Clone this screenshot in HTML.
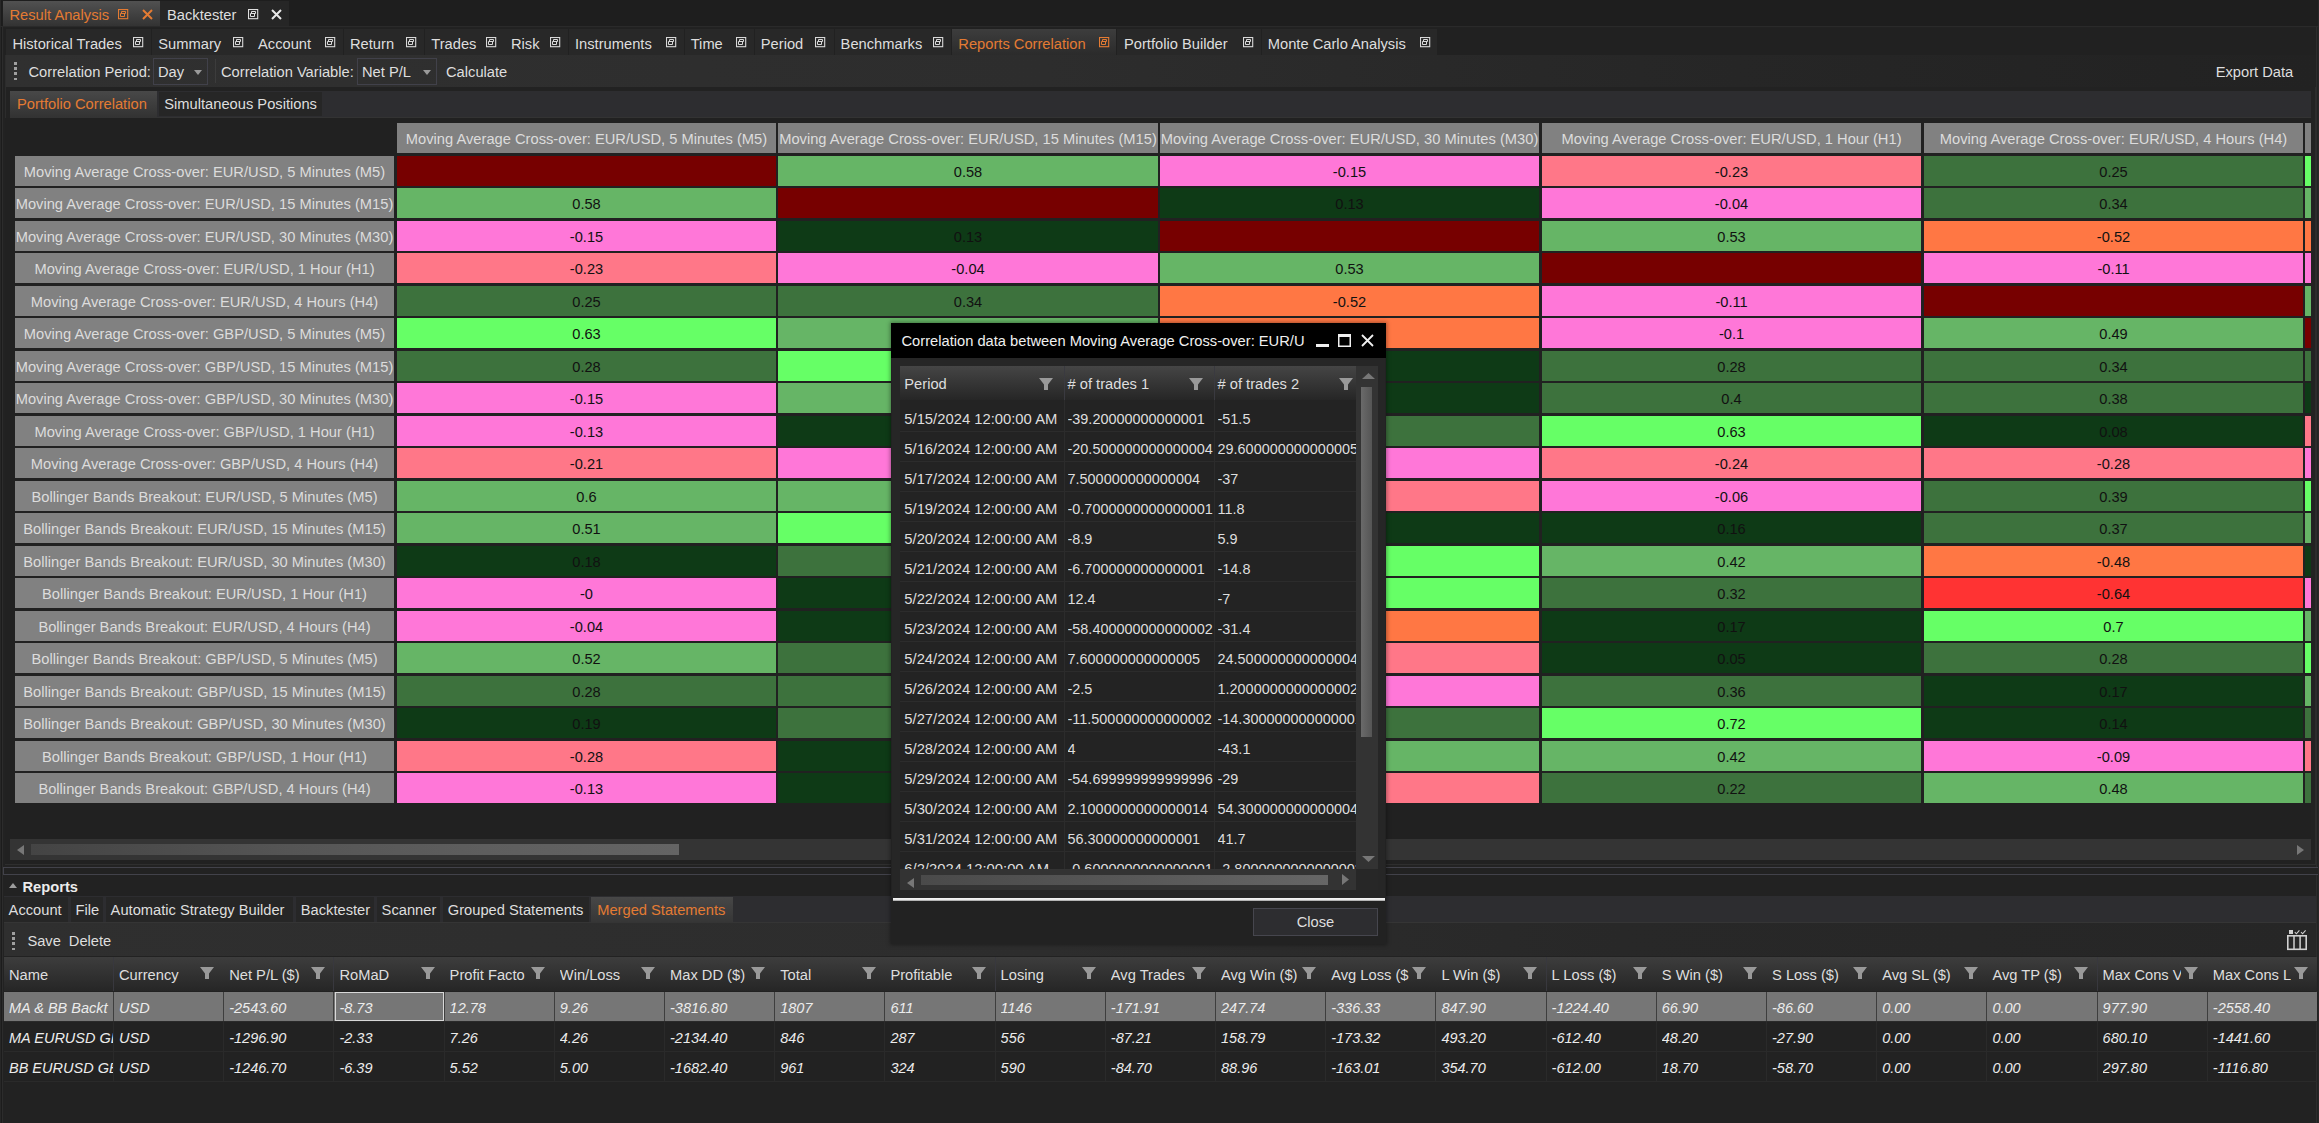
<!DOCTYPE html>
<html><head><meta charset="utf-8"><style>
html,body{margin:0;padding:0;width:2319px;height:1123px;overflow:hidden;background:#1e1e1e}
body{position:relative;font-family:"Liberation Sans",sans-serif}
body div,body svg{position:absolute}
.t{white-space:nowrap;line-height:20px;height:20px}
.c{display:flex;align-items:center;justify-content:center;white-space:nowrap;overflow:hidden;line-height:20px;padding-top:2px;box-sizing:border-box}
</style></head><body>
<div style="left:0px;top:0px;width:2319px;height:1123px;background:#1e1e1e"></div>
<div style="left:3px;top:1px;width:157px;height:25px;background:linear-gradient(#515151,#333333)"></div>
<div class="t" style="left:9.5px;top:4.5px;color:#e47b33;font-size:14.7px;">Result Analysis</div>
<svg style="left:118px;top:9px" width="11" height="11" viewBox="0 0 11 11"><rect x="0.5" y="0.5" width="9.2" height="9.2" fill="none" stroke="#e47b33" stroke-width="1.1"/><path d="M3.5 2.5h4v2h-4z M2.5 4.5h4v3h-4z" fill="none" stroke="#e47b33" stroke-width="1"/></svg>
<svg style="left:142px;top:9px" width="11" height="11" viewBox="0 0 11 11"><path d="M1 1L10 10M10 1L1 10" stroke="#e47b33" stroke-width="2"/></svg>
<div style="left:160px;top:1px;width:129px;height:25px;background:#262626"></div>
<div class="t" style="left:167px;top:4.5px;color:#dedede;font-size:14.7px;">Backtester</div>
<svg style="left:248px;top:9px" width="11" height="11" viewBox="0 0 11 11"><rect x="0.5" y="0.5" width="9.2" height="9.2" fill="none" stroke="#e0e0e0" stroke-width="1.1"/><path d="M3.5 2.5h4v2h-4z M2.5 4.5h4v3h-4z" fill="none" stroke="#e0e0e0" stroke-width="1"/></svg>
<svg style="left:271px;top:9px" width="11" height="11" viewBox="0 0 11 11"><path d="M1 1L10 10M10 1L1 10" stroke="#e8e8e8" stroke-width="2"/></svg>
<div style="left:0px;top:27px;width:2319px;height:1096px;background:#222"></div>
<div style="left:0px;top:0px;width:1px;height:1123px;background:#272727"></div>
<div style="left:1px;top:0px;width:1px;height:1123px;background:#1c1c1c"></div>
<div style="left:2px;top:27px;width:1px;height:1096px;background:#2c2c2c"></div>
<div style="left:2316px;top:27px;width:1px;height:1096px;background:#2c2c2c"></div>
<div style="left:2318px;top:0px;width:1px;height:1123px;background:#272727"></div>
<div style="left:0px;top:26px;width:2319px;height:1px;background:#2a2a2a"></div>
<div style="left:5px;top:28px;width:1px;height:837px;background:#2c2c2c"></div>
<div style="left:2315px;top:28px;width:1px;height:837px;background:#2c2c2c"></div>
<div style="left:4px;top:28px;width:2312px;height:27px;background:#212121"></div>
<div style="left:6px;top:29px;width:145.4px;height:26px;background:#282828"></div>
<div class="t" style="left:12.4px;top:33.5px;color:#dedede;font-size:14.7px;">Historical Trades</div>
<svg style="left:133px;top:37px" width="11" height="11" viewBox="0 0 11 11"><rect x="0.5" y="0.5" width="9.2" height="9.2" fill="none" stroke="#d8d8d8" stroke-width="1.1"/><path d="M3.5 2.5h4v2h-4z M2.5 4.5h4v3h-4z" fill="none" stroke="#d8d8d8" stroke-width="1"/></svg>
<div style="left:152px;top:29px;width:99.5px;height:26px;background:#282828"></div>
<div class="t" style="left:158.3px;top:33.5px;color:#dedede;font-size:14.7px;">Summary</div>
<svg style="left:233px;top:37px" width="11" height="11" viewBox="0 0 11 11"><rect x="0.5" y="0.5" width="9.2" height="9.2" fill="none" stroke="#d8d8d8" stroke-width="1.1"/><path d="M3.5 2.5h4v2h-4z M2.5 4.5h4v3h-4z" fill="none" stroke="#d8d8d8" stroke-width="1"/></svg>
<div style="left:252px;top:29px;width:91.30000000000001px;height:26px;background:#282828"></div>
<div class="t" style="left:258px;top:33.5px;color:#dedede;font-size:14.7px;">Account</div>
<svg style="left:325px;top:37px" width="11" height="11" viewBox="0 0 11 11"><rect x="0.5" y="0.5" width="9.2" height="9.2" fill="none" stroke="#d8d8d8" stroke-width="1.1"/><path d="M3.5 2.5h4v2h-4z M2.5 4.5h4v3h-4z" fill="none" stroke="#d8d8d8" stroke-width="1"/></svg>
<div style="left:344px;top:29px;width:80.30000000000001px;height:26px;background:#282828"></div>
<div class="t" style="left:350px;top:33.5px;color:#dedede;font-size:14.7px;">Return</div>
<svg style="left:406px;top:37px" width="11" height="11" viewBox="0 0 11 11"><rect x="0.5" y="0.5" width="9.2" height="9.2" fill="none" stroke="#d8d8d8" stroke-width="1.1"/><path d="M3.5 2.5h4v2h-4z M2.5 4.5h4v3h-4z" fill="none" stroke="#d8d8d8" stroke-width="1"/></svg>
<div style="left:425px;top:29px;width:79.5px;height:26px;background:#282828"></div>
<div class="t" style="left:431.3px;top:33.5px;color:#dedede;font-size:14.7px;">Trades</div>
<svg style="left:486px;top:37px" width="11" height="11" viewBox="0 0 11 11"><rect x="0.5" y="0.5" width="9.2" height="9.2" fill="none" stroke="#d8d8d8" stroke-width="1.1"/><path d="M3.5 2.5h4v2h-4z M2.5 4.5h4v3h-4z" fill="none" stroke="#d8d8d8" stroke-width="1"/></svg>
<div style="left:505px;top:29px;width:63px;height:26px;background:#282828"></div>
<div class="t" style="left:511px;top:33.5px;color:#dedede;font-size:14.7px;">Risk</div>
<svg style="left:550px;top:37px" width="11" height="11" viewBox="0 0 11 11"><rect x="0.5" y="0.5" width="9.2" height="9.2" fill="none" stroke="#d8d8d8" stroke-width="1.1"/><path d="M3.5 2.5h4v2h-4z M2.5 4.5h4v3h-4z" fill="none" stroke="#d8d8d8" stroke-width="1"/></svg>
<div style="left:569px;top:29px;width:115px;height:26px;background:#282828"></div>
<div class="t" style="left:575px;top:33.5px;color:#dedede;font-size:14.7px;">Instruments</div>
<svg style="left:666px;top:37px" width="11" height="11" viewBox="0 0 11 11"><rect x="0.5" y="0.5" width="9.2" height="9.2" fill="none" stroke="#d8d8d8" stroke-width="1.1"/><path d="M3.5 2.5h4v2h-4z M2.5 4.5h4v3h-4z" fill="none" stroke="#d8d8d8" stroke-width="1"/></svg>
<div style="left:685px;top:29px;width:69px;height:26px;background:#282828"></div>
<div class="t" style="left:690.7px;top:33.5px;color:#dedede;font-size:14.7px;">Time</div>
<svg style="left:736px;top:37px" width="11" height="11" viewBox="0 0 11 11"><rect x="0.5" y="0.5" width="9.2" height="9.2" fill="none" stroke="#d8d8d8" stroke-width="1.1"/><path d="M3.5 2.5h4v2h-4z M2.5 4.5h4v3h-4z" fill="none" stroke="#d8d8d8" stroke-width="1"/></svg>
<div style="left:755px;top:29px;width:79px;height:26px;background:#282828"></div>
<div class="t" style="left:760.8px;top:33.5px;color:#dedede;font-size:14.7px;">Period</div>
<svg style="left:815px;top:37px" width="11" height="11" viewBox="0 0 11 11"><rect x="0.5" y="0.5" width="9.2" height="9.2" fill="none" stroke="#d8d8d8" stroke-width="1.1"/><path d="M3.5 2.5h4v2h-4z M2.5 4.5h4v3h-4z" fill="none" stroke="#d8d8d8" stroke-width="1"/></svg>
<div style="left:835px;top:29px;width:116px;height:26px;background:#282828"></div>
<div class="t" style="left:840.6px;top:33.5px;color:#dedede;font-size:14.7px;">Benchmarks</div>
<svg style="left:933px;top:37px" width="11" height="11" viewBox="0 0 11 11"><rect x="0.5" y="0.5" width="9.2" height="9.2" fill="none" stroke="#d8d8d8" stroke-width="1.1"/><path d="M3.5 2.5h4v2h-4z M2.5 4.5h4v3h-4z" fill="none" stroke="#d8d8d8" stroke-width="1"/></svg>
<div style="left:952px;top:29px;width:164px;height:26px;background:linear-gradient(#3d3d3d,#2b2b2b)"></div>
<div class="t" style="left:958.3px;top:33.5px;color:#e47b33;font-size:14.7px;">Reports Correlation</div>
<svg style="left:1099px;top:37px" width="11" height="11" viewBox="0 0 11 11"><rect x="0.5" y="0.5" width="9.2" height="9.2" fill="none" stroke="#e47b33" stroke-width="1.1"/><path d="M3.5 2.5h4v2h-4z M2.5 4.5h4v3h-4z" fill="none" stroke="#e47b33" stroke-width="1"/></svg>
<div style="left:1117px;top:29px;width:143.79999999999995px;height:26px;background:#282828"></div>
<div class="t" style="left:1124px;top:33.5px;color:#dedede;font-size:14.7px;">Portfolio Builder</div>
<svg style="left:1243px;top:37px" width="11" height="11" viewBox="0 0 11 11"><rect x="0.5" y="0.5" width="9.2" height="9.2" fill="none" stroke="#d8d8d8" stroke-width="1.1"/><path d="M3.5 2.5h4v2h-4z M2.5 4.5h4v3h-4z" fill="none" stroke="#d8d8d8" stroke-width="1"/></svg>
<div style="left:1262px;top:29px;width:174.70000000000005px;height:26px;background:#282828"></div>
<div class="t" style="left:1267.8px;top:33.5px;color:#dedede;font-size:14.7px;">Monte Carlo Analysis</div>
<svg style="left:1420px;top:37px" width="11" height="11" viewBox="0 0 11 11"><rect x="0.5" y="0.5" width="9.2" height="9.2" fill="none" stroke="#d8d8d8" stroke-width="1.1"/><path d="M3.5 2.5h4v2h-4z M2.5 4.5h4v3h-4z" fill="none" stroke="#d8d8d8" stroke-width="1"/></svg>
<div style="left:6px;top:55px;width:2310px;height:32px;background:linear-gradient(to right,#303030 0%,#2d2d2d 45%,#262626 75%,#222 100%)"></div>
<div style="left:14px;top:62.0px;width:2.5px;height:2.5px;background:#a0a0a0"></div>
<div style="left:14px;top:67.2px;width:2.5px;height:2.5px;background:#a0a0a0"></div>
<div style="left:14px;top:72.4px;width:2.5px;height:2.5px;background:#a0a0a0"></div>
<div style="left:14px;top:77.6px;width:2.5px;height:2.5px;background:#a0a0a0"></div>
<div class="t" style="left:28.5px;top:62px;color:#dedede;font-size:14.7px;">Correlation Period:</div>
<div style="left:153px;top:57.5px;width:55px;height:27px;border:1px solid #41414a;box-sizing:border-box"></div>
<div class="t" style="left:158px;top:62px;color:#dedede;font-size:14.7px;">Day</div>
<svg style="left:194px;top:69.5px" width="8" height="5" viewBox="0 0 8 5"><path d="M0 0H8L4.0 5Z" fill="#9a9a9a"/></svg>
<div style="left:215px;top:59px;width:1px;height:24px;background:#3c3c3c"></div>
<div class="t" style="left:221px;top:62px;color:#dedede;font-size:14.7px;">Correlation Variable:</div>
<div style="left:357px;top:57.5px;width:80px;height:27px;border:1px solid #41414a;box-sizing:border-box"></div>
<div class="t" style="left:362px;top:62px;color:#dedede;font-size:14.7px;">Net P/L</div>
<svg style="left:423px;top:69.5px" width="8" height="5" viewBox="0 0 8 5"><path d="M0 0H8L4.0 5Z" fill="#9a9a9a"/></svg>
<div class="t" style="left:446px;top:62px;color:#dedede;font-size:14.7px;">Calculate</div>
<div class="t" style="left:2215.7px;top:62px;color:#dedede;font-size:14.7px;">Export Data</div>
<div style="left:10px;top:91px;width:2301px;height:26px;background:#2d2d30"></div>
<div style="left:10px;top:91px;width:147px;height:26px;background:linear-gradient(#484848,#333)"></div>
<div class="t" style="left:17px;top:94px;color:#e47b33;font-size:14.7px;">Portfolio Correlation</div>
<div style="left:159px;top:92px;width:162.5px;height:23.5px;background:#262626"></div>
<div class="t" style="left:164.3px;top:94px;color:#dedede;font-size:14.7px;">Simultaneous Positions</div>
<div style="left:10px;top:117px;width:2301px;height:1px;background:#333"></div>
<div style="left:5px;top:118px;width:2306px;height:746px;background:#212121;overflow:hidden">
<div class="c" style="left:392.00px;top:5.00px;width:379.00px;height:30.00px;background:#818181;color:#dcdcdc;font-size:14.7px">Moving Average Cross-over: EUR/USD, 5 Minutes (M5)</div>
<div class="c" style="left:773.00px;top:5.00px;width:380.00px;height:30.00px;background:#818181;color:#dcdcdc;font-size:14.7px">Moving Average Cross-over: EUR/USD, 15 Minutes (M15)</div>
<div class="c" style="left:1155.00px;top:5.00px;width:379.00px;height:30.00px;background:#818181;color:#dcdcdc;font-size:14.7px">Moving Average Cross-over: EUR/USD, 30 Minutes (M30)</div>
<div class="c" style="left:1537.00px;top:5.00px;width:379.00px;height:30.00px;background:#818181;color:#dcdcdc;font-size:14.7px">Moving Average Cross-over: EUR/USD, 1 Hour (H1)</div>
<div class="c" style="left:1919.00px;top:5.00px;width:379.00px;height:30.00px;background:#818181;color:#dcdcdc;font-size:14.7px">Moving Average Cross-over: EUR/USD, 4 Hours (H4)</div>
<div class="c" style="left:2300.00px;top:5.00px;width:379.00px;height:30.00px;background:#818181;color:#dcdcdc;font-size:14.7px"></div>
<div class="c" style="left:10.00px;top:38.00px;width:379.00px;height:30.00px;background:#818181;color:#dcdcdc;font-size:14.7px">Moving Average Cross-over: EUR/USD, 5 Minutes (M5)</div>
<div class="c" style="left:392.00px;top:38.00px;width:379.00px;height:30.00px;background:#770000;color:#111;font-size:14.6px"></div>
<div class="c" style="left:773.00px;top:38.00px;width:380.00px;height:30.00px;background:#66b566;color:#111;font-size:14.6px">0.58</div>
<div class="c" style="left:1155.00px;top:38.00px;width:379.00px;height:30.00px;background:#ff77d8;color:#111;font-size:14.6px">-0.15</div>
<div class="c" style="left:1537.00px;top:38.00px;width:379.00px;height:30.00px;background:#ff7788;color:#111;font-size:14.6px">-0.23</div>
<div class="c" style="left:1919.00px;top:38.00px;width:379.00px;height:30.00px;background:#3d723d;color:#111;font-size:14.6px">0.25</div>
<div class="c" style="left:2300.00px;top:38.00px;width:379.00px;height:30.00px;background:#66ff66;color:#111;font-size:14.6px"></div>
<div class="c" style="left:10.00px;top:70.00px;width:379.00px;height:30.00px;background:#818181;color:#dcdcdc;font-size:14.7px">Moving Average Cross-over: EUR/USD, 15 Minutes (M15)</div>
<div class="c" style="left:392.00px;top:70.00px;width:379.00px;height:30.00px;background:#66b566;color:#111;font-size:14.6px">0.58</div>
<div class="c" style="left:773.00px;top:70.00px;width:380.00px;height:30.00px;background:#770000;color:#111;font-size:14.6px"></div>
<div class="c" style="left:1155.00px;top:70.00px;width:379.00px;height:30.00px;background:#0e3a16;color:#111;font-size:14.6px">0.13</div>
<div class="c" style="left:1537.00px;top:70.00px;width:379.00px;height:30.00px;background:#ff77d8;color:#111;font-size:14.6px">-0.04</div>
<div class="c" style="left:1919.00px;top:70.00px;width:379.00px;height:30.00px;background:#3d723d;color:#111;font-size:14.6px">0.34</div>
<div class="c" style="left:2300.00px;top:70.00px;width:379.00px;height:30.00px;background:#66b566;color:#111;font-size:14.6px"></div>
<div class="c" style="left:10.00px;top:103.00px;width:379.00px;height:30.00px;background:#818181;color:#dcdcdc;font-size:14.7px">Moving Average Cross-over: EUR/USD, 30 Minutes (M30)</div>
<div class="c" style="left:392.00px;top:103.00px;width:379.00px;height:30.00px;background:#ff77d8;color:#111;font-size:14.6px">-0.15</div>
<div class="c" style="left:773.00px;top:103.00px;width:380.00px;height:30.00px;background:#0e3a16;color:#111;font-size:14.6px">0.13</div>
<div class="c" style="left:1155.00px;top:103.00px;width:379.00px;height:30.00px;background:#770000;color:#111;font-size:14.6px"></div>
<div class="c" style="left:1537.00px;top:103.00px;width:379.00px;height:30.00px;background:#66b566;color:#111;font-size:14.6px">0.53</div>
<div class="c" style="left:1919.00px;top:103.00px;width:379.00px;height:30.00px;background:#ff7744;color:#111;font-size:14.6px">-0.52</div>
<div class="c" style="left:2300.00px;top:103.00px;width:379.00px;height:30.00px;background:#ff7744;color:#111;font-size:14.6px"></div>
<div class="c" style="left:10.00px;top:135.00px;width:379.00px;height:30.00px;background:#818181;color:#dcdcdc;font-size:14.7px">Moving Average Cross-over: EUR/USD, 1 Hour (H1)</div>
<div class="c" style="left:392.00px;top:135.00px;width:379.00px;height:30.00px;background:#ff7788;color:#111;font-size:14.6px">-0.23</div>
<div class="c" style="left:773.00px;top:135.00px;width:380.00px;height:30.00px;background:#ff77d8;color:#111;font-size:14.6px">-0.04</div>
<div class="c" style="left:1155.00px;top:135.00px;width:379.00px;height:30.00px;background:#66b566;color:#111;font-size:14.6px">0.53</div>
<div class="c" style="left:1537.00px;top:135.00px;width:379.00px;height:30.00px;background:#770000;color:#111;font-size:14.6px"></div>
<div class="c" style="left:1919.00px;top:135.00px;width:379.00px;height:30.00px;background:#ff77d8;color:#111;font-size:14.6px">-0.11</div>
<div class="c" style="left:2300.00px;top:135.00px;width:379.00px;height:30.00px;background:#ff77d8;color:#111;font-size:14.6px"></div>
<div class="c" style="left:10.00px;top:168.00px;width:379.00px;height:30.00px;background:#818181;color:#dcdcdc;font-size:14.7px">Moving Average Cross-over: EUR/USD, 4 Hours (H4)</div>
<div class="c" style="left:392.00px;top:168.00px;width:379.00px;height:30.00px;background:#3d723d;color:#111;font-size:14.6px">0.25</div>
<div class="c" style="left:773.00px;top:168.00px;width:380.00px;height:30.00px;background:#3d723d;color:#111;font-size:14.6px">0.34</div>
<div class="c" style="left:1155.00px;top:168.00px;width:379.00px;height:30.00px;background:#ff7744;color:#111;font-size:14.6px">-0.52</div>
<div class="c" style="left:1537.00px;top:168.00px;width:379.00px;height:30.00px;background:#ff77d8;color:#111;font-size:14.6px">-0.11</div>
<div class="c" style="left:1919.00px;top:168.00px;width:379.00px;height:30.00px;background:#770000;color:#111;font-size:14.6px"></div>
<div class="c" style="left:2300.00px;top:168.00px;width:379.00px;height:30.00px;background:#66b566;color:#111;font-size:14.6px"></div>
<div class="c" style="left:10.00px;top:200.00px;width:379.00px;height:30.00px;background:#818181;color:#dcdcdc;font-size:14.7px">Moving Average Cross-over: GBP/USD, 5 Minutes (M5)</div>
<div class="c" style="left:392.00px;top:200.00px;width:379.00px;height:30.00px;background:#66ff66;color:#111;font-size:14.6px">0.63</div>
<div class="c" style="left:773.00px;top:200.00px;width:380.00px;height:30.00px;background:#66b566;color:#111;font-size:14.6px"></div>
<div class="c" style="left:1155.00px;top:200.00px;width:379.00px;height:30.00px;background:#ff7744;color:#111;font-size:14.6px"></div>
<div class="c" style="left:1537.00px;top:200.00px;width:379.00px;height:30.00px;background:#ff77d8;color:#111;font-size:14.6px">-0.1</div>
<div class="c" style="left:1919.00px;top:200.00px;width:379.00px;height:30.00px;background:#66b566;color:#111;font-size:14.6px">0.49</div>
<div class="c" style="left:2300.00px;top:200.00px;width:379.00px;height:30.00px;background:#770000;color:#111;font-size:14.6px"></div>
<div class="c" style="left:10.00px;top:233.00px;width:379.00px;height:30.00px;background:#818181;color:#dcdcdc;font-size:14.7px">Moving Average Cross-over: GBP/USD, 15 Minutes (M15)</div>
<div class="c" style="left:392.00px;top:233.00px;width:379.00px;height:30.00px;background:#3d723d;color:#111;font-size:14.6px">0.28</div>
<div class="c" style="left:773.00px;top:233.00px;width:380.00px;height:30.00px;background:#66ff66;color:#111;font-size:14.6px"></div>
<div class="c" style="left:1155.00px;top:233.00px;width:379.00px;height:30.00px;background:#0e3a16;color:#111;font-size:14.6px"></div>
<div class="c" style="left:1537.00px;top:233.00px;width:379.00px;height:30.00px;background:#3d723d;color:#111;font-size:14.6px">0.28</div>
<div class="c" style="left:1919.00px;top:233.00px;width:379.00px;height:30.00px;background:#3d723d;color:#111;font-size:14.6px">0.34</div>
<div class="c" style="left:2300.00px;top:233.00px;width:379.00px;height:30.00px;background:#3d723d;color:#111;font-size:14.6px"></div>
<div class="c" style="left:10.00px;top:265.00px;width:379.00px;height:30.00px;background:#818181;color:#dcdcdc;font-size:14.7px">Moving Average Cross-over: GBP/USD, 30 Minutes (M30)</div>
<div class="c" style="left:392.00px;top:265.00px;width:379.00px;height:30.00px;background:#ff77d8;color:#111;font-size:14.6px">-0.15</div>
<div class="c" style="left:773.00px;top:265.00px;width:380.00px;height:30.00px;background:#66b566;color:#111;font-size:14.6px"></div>
<div class="c" style="left:1155.00px;top:265.00px;width:379.00px;height:30.00px;background:#0e3a16;color:#111;font-size:14.6px"></div>
<div class="c" style="left:1537.00px;top:265.00px;width:379.00px;height:30.00px;background:#3d723d;color:#111;font-size:14.6px">0.4</div>
<div class="c" style="left:1919.00px;top:265.00px;width:379.00px;height:30.00px;background:#3d723d;color:#111;font-size:14.6px">0.38</div>
<div class="c" style="left:2300.00px;top:265.00px;width:379.00px;height:30.00px;background:#0e3a16;color:#111;font-size:14.6px"></div>
<div class="c" style="left:10.00px;top:298.00px;width:379.00px;height:30.00px;background:#818181;color:#dcdcdc;font-size:14.7px">Moving Average Cross-over: GBP/USD, 1 Hour (H1)</div>
<div class="c" style="left:392.00px;top:298.00px;width:379.00px;height:30.00px;background:#ff77d8;color:#111;font-size:14.6px">-0.13</div>
<div class="c" style="left:773.00px;top:298.00px;width:380.00px;height:30.00px;background:#0e3a16;color:#111;font-size:14.6px"></div>
<div class="c" style="left:1155.00px;top:298.00px;width:379.00px;height:30.00px;background:#3d723d;color:#111;font-size:14.6px"></div>
<div class="c" style="left:1537.00px;top:298.00px;width:379.00px;height:30.00px;background:#66ff66;color:#111;font-size:14.6px">0.63</div>
<div class="c" style="left:1919.00px;top:298.00px;width:379.00px;height:30.00px;background:#0e3a16;color:#111;font-size:14.6px">0.08</div>
<div class="c" style="left:2300.00px;top:298.00px;width:379.00px;height:30.00px;background:#ff7788;color:#111;font-size:14.6px"></div>
<div class="c" style="left:10.00px;top:330.00px;width:379.00px;height:30.00px;background:#818181;color:#dcdcdc;font-size:14.7px">Moving Average Cross-over: GBP/USD, 4 Hours (H4)</div>
<div class="c" style="left:392.00px;top:330.00px;width:379.00px;height:30.00px;background:#ff7788;color:#111;font-size:14.6px">-0.21</div>
<div class="c" style="left:773.00px;top:330.00px;width:380.00px;height:30.00px;background:#ff77d8;color:#111;font-size:14.6px"></div>
<div class="c" style="left:1155.00px;top:330.00px;width:379.00px;height:30.00px;background:#ff77d8;color:#111;font-size:14.6px"></div>
<div class="c" style="left:1537.00px;top:330.00px;width:379.00px;height:30.00px;background:#ff7788;color:#111;font-size:14.6px">-0.24</div>
<div class="c" style="left:1919.00px;top:330.00px;width:379.00px;height:30.00px;background:#ff7788;color:#111;font-size:14.6px">-0.28</div>
<div class="c" style="left:2300.00px;top:330.00px;width:379.00px;height:30.00px;background:#ff77d8;color:#111;font-size:14.6px"></div>
<div class="c" style="left:10.00px;top:363.00px;width:379.00px;height:30.00px;background:#818181;color:#dcdcdc;font-size:14.7px">Bollinger Bands Breakout: EUR/USD, 5 Minutes (M5)</div>
<div class="c" style="left:392.00px;top:363.00px;width:379.00px;height:30.00px;background:#66b566;color:#111;font-size:14.6px">0.6</div>
<div class="c" style="left:773.00px;top:363.00px;width:380.00px;height:30.00px;background:#66b566;color:#111;font-size:14.6px"></div>
<div class="c" style="left:1155.00px;top:363.00px;width:379.00px;height:30.00px;background:#ff7788;color:#111;font-size:14.6px"></div>
<div class="c" style="left:1537.00px;top:363.00px;width:379.00px;height:30.00px;background:#ff77d8;color:#111;font-size:14.6px">-0.06</div>
<div class="c" style="left:1919.00px;top:363.00px;width:379.00px;height:30.00px;background:#3d723d;color:#111;font-size:14.6px">0.39</div>
<div class="c" style="left:2300.00px;top:363.00px;width:379.00px;height:30.00px;background:#66ff66;color:#111;font-size:14.6px"></div>
<div class="c" style="left:10.00px;top:395.00px;width:379.00px;height:30.00px;background:#818181;color:#dcdcdc;font-size:14.7px">Bollinger Bands Breakout: EUR/USD, 15 Minutes (M15)</div>
<div class="c" style="left:392.00px;top:395.00px;width:379.00px;height:30.00px;background:#66b566;color:#111;font-size:14.6px">0.51</div>
<div class="c" style="left:773.00px;top:395.00px;width:380.00px;height:30.00px;background:#66ff66;color:#111;font-size:14.6px"></div>
<div class="c" style="left:1155.00px;top:395.00px;width:379.00px;height:30.00px;background:#0e3a16;color:#111;font-size:14.6px"></div>
<div class="c" style="left:1537.00px;top:395.00px;width:379.00px;height:30.00px;background:#0e3a16;color:#111;font-size:14.6px">0.16</div>
<div class="c" style="left:1919.00px;top:395.00px;width:379.00px;height:30.00px;background:#3d723d;color:#111;font-size:14.6px">0.37</div>
<div class="c" style="left:2300.00px;top:395.00px;width:379.00px;height:30.00px;background:#66b566;color:#111;font-size:14.6px"></div>
<div class="c" style="left:10.00px;top:428.00px;width:379.00px;height:30.00px;background:#818181;color:#dcdcdc;font-size:14.7px">Bollinger Bands Breakout: EUR/USD, 30 Minutes (M30)</div>
<div class="c" style="left:392.00px;top:428.00px;width:379.00px;height:30.00px;background:#0e3a16;color:#111;font-size:14.6px">0.18</div>
<div class="c" style="left:773.00px;top:428.00px;width:380.00px;height:30.00px;background:#3d723d;color:#111;font-size:14.6px"></div>
<div class="c" style="left:1155.00px;top:428.00px;width:379.00px;height:30.00px;background:#66ff66;color:#111;font-size:14.6px"></div>
<div class="c" style="left:1537.00px;top:428.00px;width:379.00px;height:30.00px;background:#66b566;color:#111;font-size:14.6px">0.42</div>
<div class="c" style="left:1919.00px;top:428.00px;width:379.00px;height:30.00px;background:#ff7744;color:#111;font-size:14.6px">-0.48</div>
<div class="c" style="left:2300.00px;top:428.00px;width:379.00px;height:30.00px;background:#0e3a16;color:#111;font-size:14.6px"></div>
<div class="c" style="left:10.00px;top:460.00px;width:379.00px;height:30.00px;background:#818181;color:#dcdcdc;font-size:14.7px">Bollinger Bands Breakout: EUR/USD, 1 Hour (H1)</div>
<div class="c" style="left:392.00px;top:460.00px;width:379.00px;height:30.00px;background:#ff77d8;color:#111;font-size:14.6px">-0</div>
<div class="c" style="left:773.00px;top:460.00px;width:380.00px;height:30.00px;background:#0e3a16;color:#111;font-size:14.6px"></div>
<div class="c" style="left:1155.00px;top:460.00px;width:379.00px;height:30.00px;background:#66ff66;color:#111;font-size:14.6px"></div>
<div class="c" style="left:1537.00px;top:460.00px;width:379.00px;height:30.00px;background:#3d723d;color:#111;font-size:14.6px">0.32</div>
<div class="c" style="left:1919.00px;top:460.00px;width:379.00px;height:30.00px;background:#ff3333;color:#111;font-size:14.6px">-0.64</div>
<div class="c" style="left:2300.00px;top:460.00px;width:379.00px;height:30.00px;background:#ff77d8;color:#111;font-size:14.6px"></div>
<div class="c" style="left:10.00px;top:493.00px;width:379.00px;height:30.00px;background:#818181;color:#dcdcdc;font-size:14.7px">Bollinger Bands Breakout: EUR/USD, 4 Hours (H4)</div>
<div class="c" style="left:392.00px;top:493.00px;width:379.00px;height:30.00px;background:#ff77d8;color:#111;font-size:14.6px">-0.04</div>
<div class="c" style="left:773.00px;top:493.00px;width:380.00px;height:30.00px;background:#0e3a16;color:#111;font-size:14.6px"></div>
<div class="c" style="left:1155.00px;top:493.00px;width:379.00px;height:30.00px;background:#ff7744;color:#111;font-size:14.6px"></div>
<div class="c" style="left:1537.00px;top:493.00px;width:379.00px;height:30.00px;background:#0e3a16;color:#111;font-size:14.6px">0.17</div>
<div class="c" style="left:1919.00px;top:493.00px;width:379.00px;height:30.00px;background:#66ff66;color:#111;font-size:14.6px">0.7</div>
<div class="c" style="left:2300.00px;top:493.00px;width:379.00px;height:30.00px;background:#66b566;color:#111;font-size:14.6px"></div>
<div class="c" style="left:10.00px;top:525.00px;width:379.00px;height:30.00px;background:#818181;color:#dcdcdc;font-size:14.7px">Bollinger Bands Breakout: GBP/USD, 5 Minutes (M5)</div>
<div class="c" style="left:392.00px;top:525.00px;width:379.00px;height:30.00px;background:#66b566;color:#111;font-size:14.6px">0.52</div>
<div class="c" style="left:773.00px;top:525.00px;width:380.00px;height:30.00px;background:#3d723d;color:#111;font-size:14.6px"></div>
<div class="c" style="left:1155.00px;top:525.00px;width:379.00px;height:30.00px;background:#ff7788;color:#111;font-size:14.6px"></div>
<div class="c" style="left:1537.00px;top:525.00px;width:379.00px;height:30.00px;background:#0e3a16;color:#111;font-size:14.6px">0.05</div>
<div class="c" style="left:1919.00px;top:525.00px;width:379.00px;height:30.00px;background:#3d723d;color:#111;font-size:14.6px">0.28</div>
<div class="c" style="left:2300.00px;top:525.00px;width:379.00px;height:30.00px;background:#66ff66;color:#111;font-size:14.6px"></div>
<div class="c" style="left:10.00px;top:558.00px;width:379.00px;height:30.00px;background:#818181;color:#dcdcdc;font-size:14.7px">Bollinger Bands Breakout: GBP/USD, 15 Minutes (M15)</div>
<div class="c" style="left:392.00px;top:558.00px;width:379.00px;height:30.00px;background:#3d723d;color:#111;font-size:14.6px">0.28</div>
<div class="c" style="left:773.00px;top:558.00px;width:380.00px;height:30.00px;background:#3d723d;color:#111;font-size:14.6px"></div>
<div class="c" style="left:1155.00px;top:558.00px;width:379.00px;height:30.00px;background:#ff77d8;color:#111;font-size:14.6px"></div>
<div class="c" style="left:1537.00px;top:558.00px;width:379.00px;height:30.00px;background:#3d723d;color:#111;font-size:14.6px">0.36</div>
<div class="c" style="left:1919.00px;top:558.00px;width:379.00px;height:30.00px;background:#0e3a16;color:#111;font-size:14.6px">0.17</div>
<div class="c" style="left:2300.00px;top:558.00px;width:379.00px;height:30.00px;background:#66b566;color:#111;font-size:14.6px"></div>
<div class="c" style="left:10.00px;top:590.00px;width:379.00px;height:30.00px;background:#818181;color:#dcdcdc;font-size:14.7px">Bollinger Bands Breakout: GBP/USD, 30 Minutes (M30)</div>
<div class="c" style="left:392.00px;top:590.00px;width:379.00px;height:30.00px;background:#0e3a16;color:#111;font-size:14.6px">0.19</div>
<div class="c" style="left:773.00px;top:590.00px;width:380.00px;height:30.00px;background:#3d723d;color:#111;font-size:14.6px"></div>
<div class="c" style="left:1155.00px;top:590.00px;width:379.00px;height:30.00px;background:#3d723d;color:#111;font-size:14.6px"></div>
<div class="c" style="left:1537.00px;top:590.00px;width:379.00px;height:30.00px;background:#66ff66;color:#111;font-size:14.6px">0.72</div>
<div class="c" style="left:1919.00px;top:590.00px;width:379.00px;height:30.00px;background:#0e3a16;color:#111;font-size:14.6px">0.14</div>
<div class="c" style="left:2300.00px;top:590.00px;width:379.00px;height:30.00px;background:#3d723d;color:#111;font-size:14.6px"></div>
<div class="c" style="left:10.00px;top:623.00px;width:379.00px;height:30.00px;background:#818181;color:#dcdcdc;font-size:14.7px">Bollinger Bands Breakout: GBP/USD, 1 Hour (H1)</div>
<div class="c" style="left:392.00px;top:623.00px;width:379.00px;height:30.00px;background:#ff7788;color:#111;font-size:14.6px">-0.28</div>
<div class="c" style="left:773.00px;top:623.00px;width:380.00px;height:30.00px;background:#0e3a16;color:#111;font-size:14.6px"></div>
<div class="c" style="left:1155.00px;top:623.00px;width:379.00px;height:30.00px;background:#66b566;color:#111;font-size:14.6px"></div>
<div class="c" style="left:1537.00px;top:623.00px;width:379.00px;height:30.00px;background:#66b566;color:#111;font-size:14.6px">0.42</div>
<div class="c" style="left:1919.00px;top:623.00px;width:379.00px;height:30.00px;background:#ff77d8;color:#111;font-size:14.6px">-0.09</div>
<div class="c" style="left:2300.00px;top:623.00px;width:379.00px;height:30.00px;background:#ff7788;color:#111;font-size:14.6px"></div>
<div class="c" style="left:10.00px;top:655.00px;width:379.00px;height:30.00px;background:#818181;color:#dcdcdc;font-size:14.7px">Bollinger Bands Breakout: GBP/USD, 4 Hours (H4)</div>
<div class="c" style="left:392.00px;top:655.00px;width:379.00px;height:30.00px;background:#ff77d8;color:#111;font-size:14.6px">-0.13</div>
<div class="c" style="left:773.00px;top:655.00px;width:380.00px;height:30.00px;background:#0e3a16;color:#111;font-size:14.6px"></div>
<div class="c" style="left:1155.00px;top:655.00px;width:379.00px;height:30.00px;background:#ff7788;color:#111;font-size:14.6px"></div>
<div class="c" style="left:1537.00px;top:655.00px;width:379.00px;height:30.00px;background:#3d723d;color:#111;font-size:14.6px">0.22</div>
<div class="c" style="left:1919.00px;top:655.00px;width:379.00px;height:30.00px;background:#66b566;color:#111;font-size:14.6px">0.48</div>
<div class="c" style="left:2300.00px;top:655.00px;width:379.00px;height:30.00px;background:#3d723d;color:#111;font-size:14.6px"></div>
<div style="left:5.00px;top:721.00px;width:2301.00px;height:21.00px;background:#343434"></div>
</div>
<svg style="left:17px;top:845px" width="7" height="10" viewBox="0 0 7 10"><path d="M7 0V10L0 5.0Z" fill="#777"/></svg>
<div style="left:31px;top:844px;width:648px;height:11px;background:linear-gradient(to right,#444,#555 40%,#5e5e5e 70%,#646464)"></div>
<svg style="left:2297px;top:845px" width="7" height="10" viewBox="0 0 7 10"><path d="M0 0V10L7 5.0Z" fill="#777"/></svg>
<div style="left:5px;top:864px;width:2311px;height:1px;background:#2e2e2e"></div>
<div style="left:3px;top:867px;width:2315px;height:8px;background:#222;border:1px solid #42424a;border-right:none;box-sizing:border-box"></div>
<svg style="left:9px;top:883px" width="8" height="5" viewBox="0 0 8 5"><path d="M0 5H8L4.0 0Z" fill="#9c9c9c"/></svg>
<div class="t" style="left:22.5px;top:877px;color:#ececec;font-size:14.7px;font-weight:bold">Reports</div>
<div style="left:4px;top:896px;width:2312px;height:26px;background:#2d2d30"></div>
<div style="left:3.9px;top:897px;width:64.0px;height:25px;background:#262626"></div>
<div class="t" style="left:8.6px;top:899.7px;color:#dedede;font-size:14.7px;">Account</div>
<div style="left:71.2px;top:897px;width:31.599999999999994px;height:25px;background:#262626"></div>
<div class="t" style="left:75.5px;top:899.7px;color:#dedede;font-size:14.7px;">File</div>
<div style="left:106px;top:897px;width:186.60000000000002px;height:25px;background:#262626"></div>
<div class="t" style="left:110.6px;top:899.7px;color:#dedede;font-size:14.7px;">Automatic Strategy Builder</div>
<div style="left:296px;top:897px;width:77.69999999999999px;height:25px;background:#262626"></div>
<div class="t" style="left:300.8px;top:899.7px;color:#dedede;font-size:14.7px;">Backtester</div>
<div style="left:377.3px;top:897px;width:62.599999999999966px;height:25px;background:#262626"></div>
<div class="t" style="left:381.6px;top:899.7px;color:#dedede;font-size:14.7px;">Scanner</div>
<div style="left:442.8px;top:897px;width:146.2px;height:25px;background:#262626"></div>
<div class="t" style="left:447.8px;top:899.7px;color:#dedede;font-size:14.7px;">Grouped Statements</div>
<div style="left:591px;top:897px;width:141.79999999999995px;height:25px;background:linear-gradient(#474747,#363636)"></div>
<div class="t" style="left:597.2px;top:899.7px;color:#e47b33;font-size:14.7px;">Merged Statements</div>
<div style="left:4px;top:922px;width:2312px;height:1px;background:#353535"></div>
<div style="left:4px;top:923px;width:2312px;height:33px;background:linear-gradient(to right,#2f2f2f 0%,#2d2d2d 45%,#282828 70%,#262626 100%)"></div>
<div style="left:12px;top:932.0px;width:2.5px;height:2.5px;background:#a0a0a0"></div>
<div style="left:12px;top:937.2px;width:2.5px;height:2.5px;background:#a0a0a0"></div>
<div style="left:12px;top:942.4px;width:2.5px;height:2.5px;background:#a0a0a0"></div>
<div style="left:12px;top:947.6px;width:2.5px;height:2.5px;background:#a0a0a0"></div>
<div class="t" style="left:27.4px;top:930.7px;color:#dedede;font-size:14.7px;">Save</div>
<div class="t" style="left:68.8px;top:930.7px;color:#dedede;font-size:14.7px;">Delete</div>
<svg style="left:2286px;top:929px" width="23" height="22" viewBox="0 0 23 22"><rect x="3" y="1" width="4" height="4" fill="#d0d0d0"/><path d="M8.8 3.2l1.6 1.6L13.4 1.4M15 3.2l1.6 1.6L19.6 1.4" stroke="#d0d0d0" stroke-width="1.1" fill="none"/><rect x="1.8" y="6.8" width="18.4" height="13.5" fill="none" stroke="#d0d0d0" stroke-width="1.6"/><path d="M8 6.8V20.3M14.1 6.8V20.3" stroke="#d0d0d0" stroke-width="1.5"/></svg>
<div style="left:4px;top:957px;width:2313px;height:34px;background:linear-gradient(#3d3d3d,#262626)"></div>
<div class="t" style="left:9.0px;top:964.7px;width:100.0px;overflow:hidden;color:#dedede;font-size:14.7px">Name</div>
<div class="t" style="left:119.0px;top:964.7px;width:78.7px;overflow:hidden;color:#dedede;font-size:14.7px">Currency</div>
<svg style="left:200px;top:967px" width="14" height="12" viewBox="0 0 14 12"><path d="M0 0H14L9 6.5V12H5V6.5Z" fill="#999"/></svg>
<div class="t" style="left:229.2px;top:964.7px;width:78.7px;overflow:hidden;color:#dedede;font-size:14.7px">Net P/L ($)</div>
<svg style="left:311px;top:967px" width="14" height="12" viewBox="0 0 14 12"><path d="M0 0H14L9 6.5V12H5V6.5Z" fill="#999"/></svg>
<div class="t" style="left:339.4px;top:964.7px;width:78.7px;overflow:hidden;color:#dedede;font-size:14.7px">RoMaD</div>
<svg style="left:421px;top:967px" width="14" height="12" viewBox="0 0 14 12"><path d="M0 0H14L9 6.5V12H5V6.5Z" fill="#999"/></svg>
<div class="t" style="left:449.6px;top:964.7px;width:78.7px;overflow:hidden;color:#dedede;font-size:14.7px">Profit Facto</div>
<svg style="left:531px;top:967px" width="14" height="12" viewBox="0 0 14 12"><path d="M0 0H14L9 6.5V12H5V6.5Z" fill="#999"/></svg>
<div class="t" style="left:559.8px;top:964.7px;width:78.7px;overflow:hidden;color:#dedede;font-size:14.7px">Win/Loss</div>
<svg style="left:641px;top:967px" width="14" height="12" viewBox="0 0 14 12"><path d="M0 0H14L9 6.5V12H5V6.5Z" fill="#999"/></svg>
<div class="t" style="left:670.0px;top:964.7px;width:78.7px;overflow:hidden;color:#dedede;font-size:14.7px">Max DD ($)</div>
<svg style="left:751px;top:967px" width="14" height="12" viewBox="0 0 14 12"><path d="M0 0H14L9 6.5V12H5V6.5Z" fill="#999"/></svg>
<div class="t" style="left:780.2px;top:964.7px;width:78.7px;overflow:hidden;color:#dedede;font-size:14.7px">Total</div>
<svg style="left:862px;top:967px" width="14" height="12" viewBox="0 0 14 12"><path d="M0 0H14L9 6.5V12H5V6.5Z" fill="#999"/></svg>
<div class="t" style="left:890.4px;top:964.7px;width:78.7px;overflow:hidden;color:#dedede;font-size:14.7px">Profitable</div>
<svg style="left:972px;top:967px" width="14" height="12" viewBox="0 0 14 12"><path d="M0 0H14L9 6.5V12H5V6.5Z" fill="#999"/></svg>
<div class="t" style="left:1000.6px;top:964.7px;width:78.7px;overflow:hidden;color:#dedede;font-size:14.7px">Losing</div>
<svg style="left:1082px;top:967px" width="14" height="12" viewBox="0 0 14 12"><path d="M0 0H14L9 6.5V12H5V6.5Z" fill="#999"/></svg>
<div class="t" style="left:1110.8px;top:964.7px;width:78.7px;overflow:hidden;color:#dedede;font-size:14.7px">Avg Trades</div>
<svg style="left:1192px;top:967px" width="14" height="12" viewBox="0 0 14 12"><path d="M0 0H14L9 6.5V12H5V6.5Z" fill="#999"/></svg>
<div class="t" style="left:1221.0px;top:964.7px;width:78.7px;overflow:hidden;color:#dedede;font-size:14.7px">Avg Win ($)</div>
<svg style="left:1302px;top:967px" width="14" height="12" viewBox="0 0 14 12"><path d="M0 0H14L9 6.5V12H5V6.5Z" fill="#999"/></svg>
<div class="t" style="left:1331.2px;top:964.7px;width:78.7px;overflow:hidden;color:#dedede;font-size:14.7px">Avg Loss ($</div>
<svg style="left:1412px;top:967px" width="14" height="12" viewBox="0 0 14 12"><path d="M0 0H14L9 6.5V12H5V6.5Z" fill="#999"/></svg>
<div class="t" style="left:1441.4px;top:964.7px;width:78.7px;overflow:hidden;color:#dedede;font-size:14.7px">L Win ($)</div>
<svg style="left:1523px;top:967px" width="14" height="12" viewBox="0 0 14 12"><path d="M0 0H14L9 6.5V12H5V6.5Z" fill="#999"/></svg>
<div class="t" style="left:1551.6px;top:964.7px;width:78.7px;overflow:hidden;color:#dedede;font-size:14.7px">L Loss ($)</div>
<svg style="left:1633px;top:967px" width="14" height="12" viewBox="0 0 14 12"><path d="M0 0H14L9 6.5V12H5V6.5Z" fill="#999"/></svg>
<div class="t" style="left:1661.8px;top:964.7px;width:78.7px;overflow:hidden;color:#dedede;font-size:14.7px">S Win ($)</div>
<svg style="left:1743px;top:967px" width="14" height="12" viewBox="0 0 14 12"><path d="M0 0H14L9 6.5V12H5V6.5Z" fill="#999"/></svg>
<div class="t" style="left:1772.0px;top:964.7px;width:78.7px;overflow:hidden;color:#dedede;font-size:14.7px">S Loss ($)</div>
<svg style="left:1853px;top:967px" width="14" height="12" viewBox="0 0 14 12"><path d="M0 0H14L9 6.5V12H5V6.5Z" fill="#999"/></svg>
<div class="t" style="left:1882.2px;top:964.7px;width:78.7px;overflow:hidden;color:#dedede;font-size:14.7px">Avg SL ($)</div>
<svg style="left:1964px;top:967px" width="14" height="12" viewBox="0 0 14 12"><path d="M0 0H14L9 6.5V12H5V6.5Z" fill="#999"/></svg>
<div class="t" style="left:1992.4px;top:964.7px;width:78.7px;overflow:hidden;color:#dedede;font-size:14.7px">Avg TP ($)</div>
<svg style="left:2074px;top:967px" width="14" height="12" viewBox="0 0 14 12"><path d="M0 0H14L9 6.5V12H5V6.5Z" fill="#999"/></svg>
<div class="t" style="left:2102.6px;top:964.7px;width:78.7px;overflow:hidden;color:#dedede;font-size:14.7px">Max Cons V</div>
<svg style="left:2184px;top:967px" width="14" height="12" viewBox="0 0 14 12"><path d="M0 0H14L9 6.5V12H5V6.5Z" fill="#999"/></svg>
<div class="t" style="left:2212.8px;top:964.7px;width:78.7px;overflow:hidden;color:#dedede;font-size:14.7px">Max Cons L</div>
<svg style="left:2294px;top:967px" width="14" height="12" viewBox="0 0 14 12"><path d="M0 0H14L9 6.5V12H5V6.5Z" fill="#999"/></svg>
<div style="left:113px;top:957px;width:1px;height:34px;background:#38383e"></div>
<div style="left:333px;top:957px;width:1px;height:34px;background:#38383e"></div>
<div style="left:995px;top:957px;width:1px;height:34px;background:#38383e"></div>
<div style="left:1546px;top:957px;width:1px;height:34px;background:#38383e"></div>
<div style="left:2097px;top:957px;width:1px;height:34px;background:#38383e"></div>
<div style="left:4px;top:992px;width:2313px;height:29px;background:#767676"></div>
<div style="left:4px;top:1021px;width:2313px;height:1px;background:#2a2a2a"></div>
<div style="left:4px;top:1051px;width:2313px;height:1px;background:#2a2a2a"></div>
<div style="left:4px;top:1081px;width:2313px;height:1px;background:#2a2a2a"></div>
<div style="left:113px;top:992px;width:1px;height:29px;background:#3e3e3e"></div>
<div style="left:113px;top:1022px;width:1px;height:59px;background:#2a2a2a"></div>
<div style="left:223px;top:992px;width:1px;height:29px;background:#3e3e3e"></div>
<div style="left:223px;top:1022px;width:1px;height:59px;background:#2a2a2a"></div>
<div style="left:333px;top:992px;width:1px;height:29px;background:#3e3e3e"></div>
<div style="left:333px;top:1022px;width:1px;height:59px;background:#2a2a2a"></div>
<div style="left:444px;top:992px;width:1px;height:29px;background:#3e3e3e"></div>
<div style="left:444px;top:1022px;width:1px;height:59px;background:#2a2a2a"></div>
<div style="left:554px;top:992px;width:1px;height:29px;background:#3e3e3e"></div>
<div style="left:554px;top:1022px;width:1px;height:59px;background:#2a2a2a"></div>
<div style="left:664px;top:992px;width:1px;height:29px;background:#3e3e3e"></div>
<div style="left:664px;top:1022px;width:1px;height:59px;background:#2a2a2a"></div>
<div style="left:774px;top:992px;width:1px;height:29px;background:#3e3e3e"></div>
<div style="left:774px;top:1022px;width:1px;height:59px;background:#2a2a2a"></div>
<div style="left:884px;top:992px;width:1px;height:29px;background:#3e3e3e"></div>
<div style="left:884px;top:1022px;width:1px;height:59px;background:#2a2a2a"></div>
<div style="left:995px;top:992px;width:1px;height:29px;background:#3e3e3e"></div>
<div style="left:995px;top:1022px;width:1px;height:59px;background:#2a2a2a"></div>
<div style="left:1105px;top:992px;width:1px;height:29px;background:#3e3e3e"></div>
<div style="left:1105px;top:1022px;width:1px;height:59px;background:#2a2a2a"></div>
<div style="left:1215px;top:992px;width:1px;height:29px;background:#3e3e3e"></div>
<div style="left:1215px;top:1022px;width:1px;height:59px;background:#2a2a2a"></div>
<div style="left:1325px;top:992px;width:1px;height:29px;background:#3e3e3e"></div>
<div style="left:1325px;top:1022px;width:1px;height:59px;background:#2a2a2a"></div>
<div style="left:1435px;top:992px;width:1px;height:29px;background:#3e3e3e"></div>
<div style="left:1435px;top:1022px;width:1px;height:59px;background:#2a2a2a"></div>
<div style="left:1546px;top:992px;width:1px;height:29px;background:#3e3e3e"></div>
<div style="left:1546px;top:1022px;width:1px;height:59px;background:#2a2a2a"></div>
<div style="left:1656px;top:992px;width:1px;height:29px;background:#3e3e3e"></div>
<div style="left:1656px;top:1022px;width:1px;height:59px;background:#2a2a2a"></div>
<div style="left:1766px;top:992px;width:1px;height:29px;background:#3e3e3e"></div>
<div style="left:1766px;top:1022px;width:1px;height:59px;background:#2a2a2a"></div>
<div style="left:1876px;top:992px;width:1px;height:29px;background:#3e3e3e"></div>
<div style="left:1876px;top:1022px;width:1px;height:59px;background:#2a2a2a"></div>
<div style="left:1986px;top:992px;width:1px;height:29px;background:#3e3e3e"></div>
<div style="left:1986px;top:1022px;width:1px;height:59px;background:#2a2a2a"></div>
<div style="left:2097px;top:992px;width:1px;height:29px;background:#3e3e3e"></div>
<div style="left:2097px;top:1022px;width:1px;height:59px;background:#2a2a2a"></div>
<div style="left:2207px;top:992px;width:1px;height:29px;background:#3e3e3e"></div>
<div style="left:2207px;top:1022px;width:1px;height:59px;background:#2a2a2a"></div>
<div class="t" style="left:9.0px;top:997.6px;width:103.5px;overflow:hidden;color:#ececec;font-size:14.5px;font-style:italic">MA &amp; BB Backt</div>
<div class="t" style="left:119.0px;top:997.6px;width:103.7px;overflow:hidden;color:#ececec;font-size:14.5px;font-style:italic">USD</div>
<div class="t" style="left:229.2px;top:997.6px;width:103.7px;overflow:hidden;color:#ececec;font-size:14.5px;font-style:italic">-2543.60</div>
<div class="t" style="left:339.4px;top:997.6px;width:103.7px;overflow:hidden;color:#ececec;font-size:14.5px;font-style:italic">-8.73</div>
<div class="t" style="left:449.6px;top:997.6px;width:103.7px;overflow:hidden;color:#ececec;font-size:14.5px;font-style:italic">12.78</div>
<div class="t" style="left:559.8px;top:997.6px;width:103.7px;overflow:hidden;color:#ececec;font-size:14.5px;font-style:italic">9.26</div>
<div class="t" style="left:670.0px;top:997.6px;width:103.7px;overflow:hidden;color:#ececec;font-size:14.5px;font-style:italic">-3816.80</div>
<div class="t" style="left:780.2px;top:997.6px;width:103.7px;overflow:hidden;color:#ececec;font-size:14.5px;font-style:italic">1807</div>
<div class="t" style="left:890.4px;top:997.6px;width:103.7px;overflow:hidden;color:#ececec;font-size:14.5px;font-style:italic">611</div>
<div class="t" style="left:1000.6px;top:997.6px;width:103.7px;overflow:hidden;color:#ececec;font-size:14.5px;font-style:italic">1146</div>
<div class="t" style="left:1110.8px;top:997.6px;width:103.7px;overflow:hidden;color:#ececec;font-size:14.5px;font-style:italic">-171.91</div>
<div class="t" style="left:1221.0px;top:997.6px;width:103.7px;overflow:hidden;color:#ececec;font-size:14.5px;font-style:italic">247.74</div>
<div class="t" style="left:1331.2px;top:997.6px;width:103.7px;overflow:hidden;color:#ececec;font-size:14.5px;font-style:italic">-336.33</div>
<div class="t" style="left:1441.4px;top:997.6px;width:103.7px;overflow:hidden;color:#ececec;font-size:14.5px;font-style:italic">847.90</div>
<div class="t" style="left:1551.6px;top:997.6px;width:103.7px;overflow:hidden;color:#ececec;font-size:14.5px;font-style:italic">-1224.40</div>
<div class="t" style="left:1661.8px;top:997.6px;width:103.7px;overflow:hidden;color:#ececec;font-size:14.5px;font-style:italic">66.90</div>
<div class="t" style="left:1772.0px;top:997.6px;width:103.7px;overflow:hidden;color:#ececec;font-size:14.5px;font-style:italic">-86.60</div>
<div class="t" style="left:1882.2px;top:997.6px;width:103.7px;overflow:hidden;color:#ececec;font-size:14.5px;font-style:italic">0.00</div>
<div class="t" style="left:1992.4px;top:997.6px;width:103.7px;overflow:hidden;color:#ececec;font-size:14.5px;font-style:italic">0.00</div>
<div class="t" style="left:2102.6px;top:997.6px;width:103.7px;overflow:hidden;color:#ececec;font-size:14.5px;font-style:italic">977.90</div>
<div class="t" style="left:2212.8px;top:997.6px;width:103.7px;overflow:hidden;color:#ececec;font-size:14.5px;font-style:italic">-2558.40</div>
<div class="t" style="left:9.0px;top:1027.6px;width:103.5px;overflow:hidden;color:#ececec;font-size:14.5px;font-style:italic">MA EURUSD GE</div>
<div class="t" style="left:119.0px;top:1027.6px;width:103.7px;overflow:hidden;color:#ececec;font-size:14.5px;font-style:italic">USD</div>
<div class="t" style="left:229.2px;top:1027.6px;width:103.7px;overflow:hidden;color:#ececec;font-size:14.5px;font-style:italic">-1296.90</div>
<div class="t" style="left:339.4px;top:1027.6px;width:103.7px;overflow:hidden;color:#ececec;font-size:14.5px;font-style:italic">-2.33</div>
<div class="t" style="left:449.6px;top:1027.6px;width:103.7px;overflow:hidden;color:#ececec;font-size:14.5px;font-style:italic">7.26</div>
<div class="t" style="left:559.8px;top:1027.6px;width:103.7px;overflow:hidden;color:#ececec;font-size:14.5px;font-style:italic">4.26</div>
<div class="t" style="left:670.0px;top:1027.6px;width:103.7px;overflow:hidden;color:#ececec;font-size:14.5px;font-style:italic">-2134.40</div>
<div class="t" style="left:780.2px;top:1027.6px;width:103.7px;overflow:hidden;color:#ececec;font-size:14.5px;font-style:italic">846</div>
<div class="t" style="left:890.4px;top:1027.6px;width:103.7px;overflow:hidden;color:#ececec;font-size:14.5px;font-style:italic">287</div>
<div class="t" style="left:1000.6px;top:1027.6px;width:103.7px;overflow:hidden;color:#ececec;font-size:14.5px;font-style:italic">556</div>
<div class="t" style="left:1110.8px;top:1027.6px;width:103.7px;overflow:hidden;color:#ececec;font-size:14.5px;font-style:italic">-87.21</div>
<div class="t" style="left:1221.0px;top:1027.6px;width:103.7px;overflow:hidden;color:#ececec;font-size:14.5px;font-style:italic">158.79</div>
<div class="t" style="left:1331.2px;top:1027.6px;width:103.7px;overflow:hidden;color:#ececec;font-size:14.5px;font-style:italic">-173.32</div>
<div class="t" style="left:1441.4px;top:1027.6px;width:103.7px;overflow:hidden;color:#ececec;font-size:14.5px;font-style:italic">493.20</div>
<div class="t" style="left:1551.6px;top:1027.6px;width:103.7px;overflow:hidden;color:#ececec;font-size:14.5px;font-style:italic">-612.40</div>
<div class="t" style="left:1661.8px;top:1027.6px;width:103.7px;overflow:hidden;color:#ececec;font-size:14.5px;font-style:italic">48.20</div>
<div class="t" style="left:1772.0px;top:1027.6px;width:103.7px;overflow:hidden;color:#ececec;font-size:14.5px;font-style:italic">-27.90</div>
<div class="t" style="left:1882.2px;top:1027.6px;width:103.7px;overflow:hidden;color:#ececec;font-size:14.5px;font-style:italic">0.00</div>
<div class="t" style="left:1992.4px;top:1027.6px;width:103.7px;overflow:hidden;color:#ececec;font-size:14.5px;font-style:italic">0.00</div>
<div class="t" style="left:2102.6px;top:1027.6px;width:103.7px;overflow:hidden;color:#ececec;font-size:14.5px;font-style:italic">680.10</div>
<div class="t" style="left:2212.8px;top:1027.6px;width:103.7px;overflow:hidden;color:#ececec;font-size:14.5px;font-style:italic">-1441.60</div>
<div class="t" style="left:9.0px;top:1057.6px;width:103.5px;overflow:hidden;color:#ececec;font-size:14.5px;font-style:italic">BB EURUSD GB</div>
<div class="t" style="left:119.0px;top:1057.6px;width:103.7px;overflow:hidden;color:#ececec;font-size:14.5px;font-style:italic">USD</div>
<div class="t" style="left:229.2px;top:1057.6px;width:103.7px;overflow:hidden;color:#ececec;font-size:14.5px;font-style:italic">-1246.70</div>
<div class="t" style="left:339.4px;top:1057.6px;width:103.7px;overflow:hidden;color:#ececec;font-size:14.5px;font-style:italic">-6.39</div>
<div class="t" style="left:449.6px;top:1057.6px;width:103.7px;overflow:hidden;color:#ececec;font-size:14.5px;font-style:italic">5.52</div>
<div class="t" style="left:559.8px;top:1057.6px;width:103.7px;overflow:hidden;color:#ececec;font-size:14.5px;font-style:italic">5.00</div>
<div class="t" style="left:670.0px;top:1057.6px;width:103.7px;overflow:hidden;color:#ececec;font-size:14.5px;font-style:italic">-1682.40</div>
<div class="t" style="left:780.2px;top:1057.6px;width:103.7px;overflow:hidden;color:#ececec;font-size:14.5px;font-style:italic">961</div>
<div class="t" style="left:890.4px;top:1057.6px;width:103.7px;overflow:hidden;color:#ececec;font-size:14.5px;font-style:italic">324</div>
<div class="t" style="left:1000.6px;top:1057.6px;width:103.7px;overflow:hidden;color:#ececec;font-size:14.5px;font-style:italic">590</div>
<div class="t" style="left:1110.8px;top:1057.6px;width:103.7px;overflow:hidden;color:#ececec;font-size:14.5px;font-style:italic">-84.70</div>
<div class="t" style="left:1221.0px;top:1057.6px;width:103.7px;overflow:hidden;color:#ececec;font-size:14.5px;font-style:italic">88.96</div>
<div class="t" style="left:1331.2px;top:1057.6px;width:103.7px;overflow:hidden;color:#ececec;font-size:14.5px;font-style:italic">-163.01</div>
<div class="t" style="left:1441.4px;top:1057.6px;width:103.7px;overflow:hidden;color:#ececec;font-size:14.5px;font-style:italic">354.70</div>
<div class="t" style="left:1551.6px;top:1057.6px;width:103.7px;overflow:hidden;color:#ececec;font-size:14.5px;font-style:italic">-612.00</div>
<div class="t" style="left:1661.8px;top:1057.6px;width:103.7px;overflow:hidden;color:#ececec;font-size:14.5px;font-style:italic">18.70</div>
<div class="t" style="left:1772.0px;top:1057.6px;width:103.7px;overflow:hidden;color:#ececec;font-size:14.5px;font-style:italic">-58.70</div>
<div class="t" style="left:1882.2px;top:1057.6px;width:103.7px;overflow:hidden;color:#ececec;font-size:14.5px;font-style:italic">0.00</div>
<div class="t" style="left:1992.4px;top:1057.6px;width:103.7px;overflow:hidden;color:#ececec;font-size:14.5px;font-style:italic">0.00</div>
<div class="t" style="left:2102.6px;top:1057.6px;width:103.7px;overflow:hidden;color:#ececec;font-size:14.5px;font-style:italic">297.80</div>
<div class="t" style="left:2212.8px;top:1057.6px;width:103.7px;overflow:hidden;color:#ececec;font-size:14.5px;font-style:italic">-1116.80</div>
<div style="left:335px;top:992px;width:108.5px;height:29px;border:1px solid #d8d8d8;box-sizing:border-box"></div>
<div style="left:891px;top:323px;width:495px;height:621px;background:#222;box-shadow:0 0 4px 1px rgba(0,0,0,0.35)"></div>
<div style="left:891px;top:323px;width:495px;height:35px;background:#000"></div>
<div class="t" style="left:901.5px;top:331px;color:#f0f0f0;font-size:14.7px;">Correlation data between Moving Average Cross-over: EUR/U</div>
<div style="left:1316px;top:344px;width:13px;height:3px;background:#f0f0f0"></div>
<svg style="left:1338px;top:334px" width="13" height="13" viewBox="0 0 13 13"><path d="M0.75 1.5H12.25V12.25H0.75Z" fill="none" stroke="#f0f0f0" stroke-width="1.5"/><rect x="0" y="0" width="13" height="3" fill="#f0f0f0"/></svg>
<svg style="left:1361px;top:334px" width="13" height="13" viewBox="0 0 13 13"><path d="M1 1L12 12M12 1L1 12" stroke="#f0f0f0" stroke-width="1.8"/></svg>
<div style="left:892px;top:358px;width:493px;height:585px;background:#262626"></div>
<div style="left:900px;top:366px;width:478px;height:524px;background:#2d2d2d"></div>
<div style="left:900px;top:366px;width:456px;height:34px;background:linear-gradient(#454545,#262626)"></div>
<div style="left:1064px;top:366px;width:1px;height:34px;background:#3a3a40"></div>
<div style="left:1214px;top:366px;width:1px;height:34px;background:#3a3a40"></div>
<div class="t" style="left:904.3px;top:373.7px;color:#dedede;font-size:14.7px;">Period</div>
<svg style="left:1039px;top:378px" width="14" height="12" viewBox="0 0 14 12"><path d="M0 0H14L9 6.5V12H5V6.5Z" fill="#999"/></svg>
<div class="t" style="left:1067.5px;top:373.7px;color:#dedede;font-size:14.7px;"># of trades 1</div>
<svg style="left:1189px;top:378px" width="14" height="12" viewBox="0 0 14 12"><path d="M0 0H14L9 6.5V12H5V6.5Z" fill="#999"/></svg>
<div class="t" style="left:1217.5px;top:373.7px;color:#dedede;font-size:14.7px;"># of trades 2</div>
<svg style="left:1339px;top:378px" width="14" height="12" viewBox="0 0 14 12"><path d="M0 0H14L9 6.5V12H5V6.5Z" fill="#999"/></svg>
<div style="left:900px;top:400px;width:456px;height:469px;background:#232323;overflow:hidden">
<div style="left:0;top:30.5px;width:456px;height:1px;background:#2c2c2c"></div>
<div class="t" style="left:4.3px;top:8.5px;color:#dedede;font-size:14.8px">5/15/2024 12:00:00 AM</div>
<div class="t" style="left:167.5px;top:8.5px;width:146.5px;overflow:hidden;color:#dedede;font-size:14.45px">-39.20000000000001</div>
<div class="t" style="left:317.5px;top:8.5px;width:139px;overflow:hidden;color:#dedede;font-size:14.45px">-51.5</div>
<div style="left:0;top:60.5px;width:456px;height:1px;background:#2c2c2c"></div>
<div class="t" style="left:4.3px;top:38.5px;color:#dedede;font-size:14.8px">5/16/2024 12:00:00 AM</div>
<div class="t" style="left:167.5px;top:38.5px;width:146.5px;overflow:hidden;color:#dedede;font-size:14.45px">-20.500000000000004</div>
<div class="t" style="left:317.5px;top:38.5px;width:139px;overflow:hidden;color:#dedede;font-size:14.45px">29.600000000000005</div>
<div style="left:0;top:90.5px;width:456px;height:1px;background:#2c2c2c"></div>
<div class="t" style="left:4.3px;top:68.5px;color:#dedede;font-size:14.8px">5/17/2024 12:00:00 AM</div>
<div class="t" style="left:167.5px;top:68.5px;width:146.5px;overflow:hidden;color:#dedede;font-size:14.45px">7.500000000000004</div>
<div class="t" style="left:317.5px;top:68.5px;width:139px;overflow:hidden;color:#dedede;font-size:14.45px">-37</div>
<div style="left:0;top:120.5px;width:456px;height:1px;background:#2c2c2c"></div>
<div class="t" style="left:4.3px;top:98.5px;color:#dedede;font-size:14.8px">5/19/2024 12:00:00 AM</div>
<div class="t" style="left:167.5px;top:98.5px;width:146.5px;overflow:hidden;color:#dedede;font-size:14.45px">-0.7000000000000001</div>
<div class="t" style="left:317.5px;top:98.5px;width:139px;overflow:hidden;color:#dedede;font-size:14.45px">11.8</div>
<div style="left:0;top:150.5px;width:456px;height:1px;background:#2c2c2c"></div>
<div class="t" style="left:4.3px;top:128.5px;color:#dedede;font-size:14.8px">5/20/2024 12:00:00 AM</div>
<div class="t" style="left:167.5px;top:128.5px;width:146.5px;overflow:hidden;color:#dedede;font-size:14.45px">-8.9</div>
<div class="t" style="left:317.5px;top:128.5px;width:139px;overflow:hidden;color:#dedede;font-size:14.45px">5.9</div>
<div style="left:0;top:180.5px;width:456px;height:1px;background:#2c2c2c"></div>
<div class="t" style="left:4.3px;top:158.5px;color:#dedede;font-size:14.8px">5/21/2024 12:00:00 AM</div>
<div class="t" style="left:167.5px;top:158.5px;width:146.5px;overflow:hidden;color:#dedede;font-size:14.45px">-6.700000000000001</div>
<div class="t" style="left:317.5px;top:158.5px;width:139px;overflow:hidden;color:#dedede;font-size:14.45px">-14.8</div>
<div style="left:0;top:210.5px;width:456px;height:1px;background:#2c2c2c"></div>
<div class="t" style="left:4.3px;top:188.5px;color:#dedede;font-size:14.8px">5/22/2024 12:00:00 AM</div>
<div class="t" style="left:167.5px;top:188.5px;width:146.5px;overflow:hidden;color:#dedede;font-size:14.45px">12.4</div>
<div class="t" style="left:317.5px;top:188.5px;width:139px;overflow:hidden;color:#dedede;font-size:14.45px">-7</div>
<div style="left:0;top:240.5px;width:456px;height:1px;background:#2c2c2c"></div>
<div class="t" style="left:4.3px;top:218.5px;color:#dedede;font-size:14.8px">5/23/2024 12:00:00 AM</div>
<div class="t" style="left:167.5px;top:218.5px;width:146.5px;overflow:hidden;color:#dedede;font-size:14.45px">-58.400000000000002</div>
<div class="t" style="left:317.5px;top:218.5px;width:139px;overflow:hidden;color:#dedede;font-size:14.45px">-31.4</div>
<div style="left:0;top:270.5px;width:456px;height:1px;background:#2c2c2c"></div>
<div class="t" style="left:4.3px;top:248.5px;color:#dedede;font-size:14.8px">5/24/2024 12:00:00 AM</div>
<div class="t" style="left:167.5px;top:248.5px;width:146.5px;overflow:hidden;color:#dedede;font-size:14.45px">7.600000000000005</div>
<div class="t" style="left:317.5px;top:248.5px;width:139px;overflow:hidden;color:#dedede;font-size:14.45px">24.500000000000004</div>
<div style="left:0;top:300.5px;width:456px;height:1px;background:#2c2c2c"></div>
<div class="t" style="left:4.3px;top:278.5px;color:#dedede;font-size:14.8px">5/26/2024 12:00:00 AM</div>
<div class="t" style="left:167.5px;top:278.5px;width:146.5px;overflow:hidden;color:#dedede;font-size:14.45px">-2.5</div>
<div class="t" style="left:317.5px;top:278.5px;width:139px;overflow:hidden;color:#dedede;font-size:14.45px">1.2000000000000002</div>
<div style="left:0;top:330.5px;width:456px;height:1px;background:#2c2c2c"></div>
<div class="t" style="left:4.3px;top:308.5px;color:#dedede;font-size:14.8px">5/27/2024 12:00:00 AM</div>
<div class="t" style="left:167.5px;top:308.5px;width:146.5px;overflow:hidden;color:#dedede;font-size:14.45px">-11.500000000000002</div>
<div class="t" style="left:317.5px;top:308.5px;width:139px;overflow:hidden;color:#dedede;font-size:14.45px">-14.300000000000001</div>
<div style="left:0;top:360.5px;width:456px;height:1px;background:#2c2c2c"></div>
<div class="t" style="left:4.3px;top:338.5px;color:#dedede;font-size:14.8px">5/28/2024 12:00:00 AM</div>
<div class="t" style="left:167.5px;top:338.5px;width:146.5px;overflow:hidden;color:#dedede;font-size:14.45px">4</div>
<div class="t" style="left:317.5px;top:338.5px;width:139px;overflow:hidden;color:#dedede;font-size:14.45px">-43.1</div>
<div style="left:0;top:390.5px;width:456px;height:1px;background:#2c2c2c"></div>
<div class="t" style="left:4.3px;top:368.5px;color:#dedede;font-size:14.8px">5/29/2024 12:00:00 AM</div>
<div class="t" style="left:167.5px;top:368.5px;width:146.5px;overflow:hidden;color:#dedede;font-size:14.45px">-54.699999999999996</div>
<div class="t" style="left:317.5px;top:368.5px;width:139px;overflow:hidden;color:#dedede;font-size:14.45px">-29</div>
<div style="left:0;top:420.5px;width:456px;height:1px;background:#2c2c2c"></div>
<div class="t" style="left:4.3px;top:398.5px;color:#dedede;font-size:14.8px">5/30/2024 12:00:00 AM</div>
<div class="t" style="left:167.5px;top:398.5px;width:146.5px;overflow:hidden;color:#dedede;font-size:14.45px">2.1000000000000014</div>
<div class="t" style="left:317.5px;top:398.5px;width:139px;overflow:hidden;color:#dedede;font-size:14.45px">54.300000000000004</div>
<div style="left:0;top:450.5px;width:456px;height:1px;background:#2c2c2c"></div>
<div class="t" style="left:4.3px;top:428.5px;color:#dedede;font-size:14.8px">5/31/2024 12:00:00 AM</div>
<div class="t" style="left:167.5px;top:428.5px;width:146.5px;overflow:hidden;color:#dedede;font-size:14.45px">56.30000000000001</div>
<div class="t" style="left:317.5px;top:428.5px;width:139px;overflow:hidden;color:#dedede;font-size:14.45px">41.7</div>
<div style="left:0;top:480.5px;width:456px;height:1px;background:#2c2c2c"></div>
<div class="t" style="left:4.3px;top:458.5px;color:#dedede;font-size:14.8px">6/2/2024 12:00:00 AM</div>
<div class="t" style="left:167.5px;top:458.5px;width:146.5px;overflow:hidden;color:#dedede;font-size:14.45px">-0.6000000000000001</div>
<div class="t" style="left:317.5px;top:458.5px;width:139px;overflow:hidden;color:#dedede;font-size:14.45px">-2.8000000000000003</div>
<div style="left:164px;top:0;width:1px;height:469px;background:#2c2c2c"></div>
<div style="left:314px;top:0;width:1px;height:469px;background:#2c2c2c"></div>
</div>
<div style="left:1356px;top:366px;width:22px;height:503px;background:#333"></div>
<svg style="left:1362px;top:373px" width="13" height="6" viewBox="0 0 13 6"><path d="M0 6H13L6.5 0Z" fill="#777"/></svg>
<div style="left:1361px;top:387px;width:11px;height:350px;background:linear-gradient(to right,#6a6a6a,#555)"></div>
<svg style="left:1362px;top:856px" width="13" height="6" viewBox="0 0 13 6"><path d="M0 0H13L6.5 6Z" fill="#777"/></svg>
<div style="left:900px;top:869px;width:456px;height:21px;background:#333"></div>
<svg style="left:907px;top:878px" width="7" height="10" viewBox="0 0 7 10"><path d="M7 0V10L0 5.0Z" fill="#777"/></svg>
<div style="left:921px;top:874.5px;width:407px;height:10.5px;background:linear-gradient(to right,#4a4a4a,#575757 50%,#666)"></div>
<svg style="left:1342px;top:874px" width="7" height="11" viewBox="0 0 7 11"><path d="M0 0V11L7 5.5Z" fill="#777"/></svg>
<div style="left:1356px;top:869px;width:22px;height:21px;background:#272727"></div>
<div style="left:893px;top:897.8px;width:492px;height:3.3px;background:linear-gradient(#f2f2f2 45%,#9a9a9a)"></div>
<div style="left:892px;top:901px;width:493px;height:42px;background:#222"></div>
<div style="left:1253px;top:908px;width:125px;height:27.5px;background:#2d2d30;border:1px solid #46464e;box-sizing:border-box"></div>
<div class="t" style="left:1253px;width:125px;text-align:center;top:912px;color:#dedede;font-size:14.7px;">Close</div>
</body></html>
